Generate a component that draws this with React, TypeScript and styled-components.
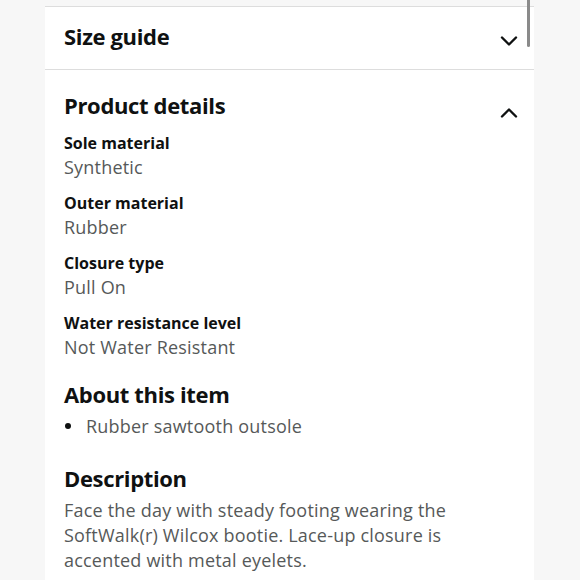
import React from 'react';
import styled, { createGlobalStyle } from 'styled-components';

const GlobalStyle = createGlobalStyle`
    html, body {
        margin: 0;
        padding: 0;
        background: #f7f7f7;
        font-family: "Open Sans", "Noto Sans", sans-serif;
        color: #0f1111;
    }
`;

const Page = styled.div`
    position: relative;
    width: 580px;
    height: 580px;
    overflow: hidden;
    padding-top: 6px;
    box-sizing: border-box;
`;

const Panel = styled.div`
    margin-left: 45px;
    width: 489px;
    background: #ffffff;
    min-height: 574px;
`;

const Row = styled.div`
    display: flex;
    align-items: center;
    justify-content: space-between;
    height: 62px;
    padding: 0 16px 0 19px;
    border-top: 1px solid #dddddd;
    border-bottom: 1px solid #dddddd;
`;

const Section = styled.div`
    padding: 21px 16px 0 19px;
`;

const SectionHead = styled.div`
    display: flex;
    align-items: center;
    justify-content: space-between;
`;

const Heading = styled.h2<{ $top?: number }>`
    margin: ${(p) => p.$top ?? 0}px 0 0;
    font-size: 22px;
    line-height: 28px;
    font-weight: 700;
    letter-spacing: -0.35px;
`;

const Chevron = styled.svg<{ $down?: boolean }>`
    width: 18px;
    height: 10px;
    margin-top: ${(p) => (p.$down ? 6 : 16)}px;
`;

const Details = styled.dl`
    margin: 12px 0 0;
    display: flex;
    flex-direction: column;
    gap: 12px;
`;

const Label = styled.dt`
    font-size: 16px;
    line-height: 24px;
    font-weight: 700;
`;

const Value = styled.dd`
    margin: 0;
    font-size: 18px;
    line-height: 24px;
    letter-spacing: 0.2px;
    color: #565959;
`;

const Bullets = styled.ul`
    margin: 5px 0 0;
    padding: 0;
    list-style: none;
`;

const Bullet = styled.li`
    display: flex;
    font-size: 18px;
    line-height: 26px;
    letter-spacing: 0.2px;
    color: #565959;
`;

const Dot = styled.span`
    flex: 0 0 22px;
    display: flex;
    align-items: center;
    &::before {
        content: '';
        width: 6px;
        height: 6px;
        margin-left: 1px;
        border-radius: 50%;
        background: #0f1111;
    }
`;

const Text = styled.p`
    margin: 6px 0 0;
    font-size: 18px;
    line-height: 25px;
    letter-spacing: 0.2px;
    color: #565959;
`;

const Scrollbar = styled.div`
    position: absolute;
    left: 527px;
    top: -4px;
    width: 3px;
    height: 51px;
    border-radius: 2px;
    background: #8a8a8a;
`;

const ChevronIcon = ({ down }: { down?: boolean }) => (
    <Chevron $down={down} viewBox="0 0 18 10">
        <path
            d={down ? 'M2 1.5 L9 8.5 L16 1.5' : 'M2 8.5 L9 1.5 L16 8.5'}
            fill="none"
            stroke="#0f1111"
            strokeWidth="2.4"
            strokeLinecap="round"
            strokeLinejoin="round"
        />
    </Chevron>
);

const details = [
    ['Sole material', 'Synthetic'],
    ['Outer material', 'Rubber'],
    ['Closure type', 'Pull On'],
    ['Water resistance level', 'Not Water Resistant'],
];

export default function App() {
    return (
        <>
            <GlobalStyle />
            <Page>
                <Panel>
                    <Row>
                        <Heading $top={-4}>Size guide</Heading>
                        <ChevronIcon down />
                    </Row>
                    <Section>
                        <SectionHead>
                            <Heading>Product details</Heading>
                            <ChevronIcon />
                        </SectionHead>
                        <Details>
                            {details.map(([label, value]) => (
                                <div key={label}>
                                    <Label>{label}</Label>
                                    <Value>{value}</Value>
                                </div>
                            ))}
                        </Details>
                        <Heading $top={21}>About this item</Heading>
                        <Bullets>
                            <Bullet>
                                <Dot />
                                Rubber sawtooth outsole
                            </Bullet>
                        </Bullets>
                        <Heading $top={25}>Description</Heading>
                        <Text>
                            Face the day with steady footing wearing the SoftWalk(r) Wilcox
                            bootie. Lace-up closure is accented with metal eyelets.
                        </Text>
                    </Section>
                </Panel>
                <Scrollbar />
            </Page>
        </>
    );
}
